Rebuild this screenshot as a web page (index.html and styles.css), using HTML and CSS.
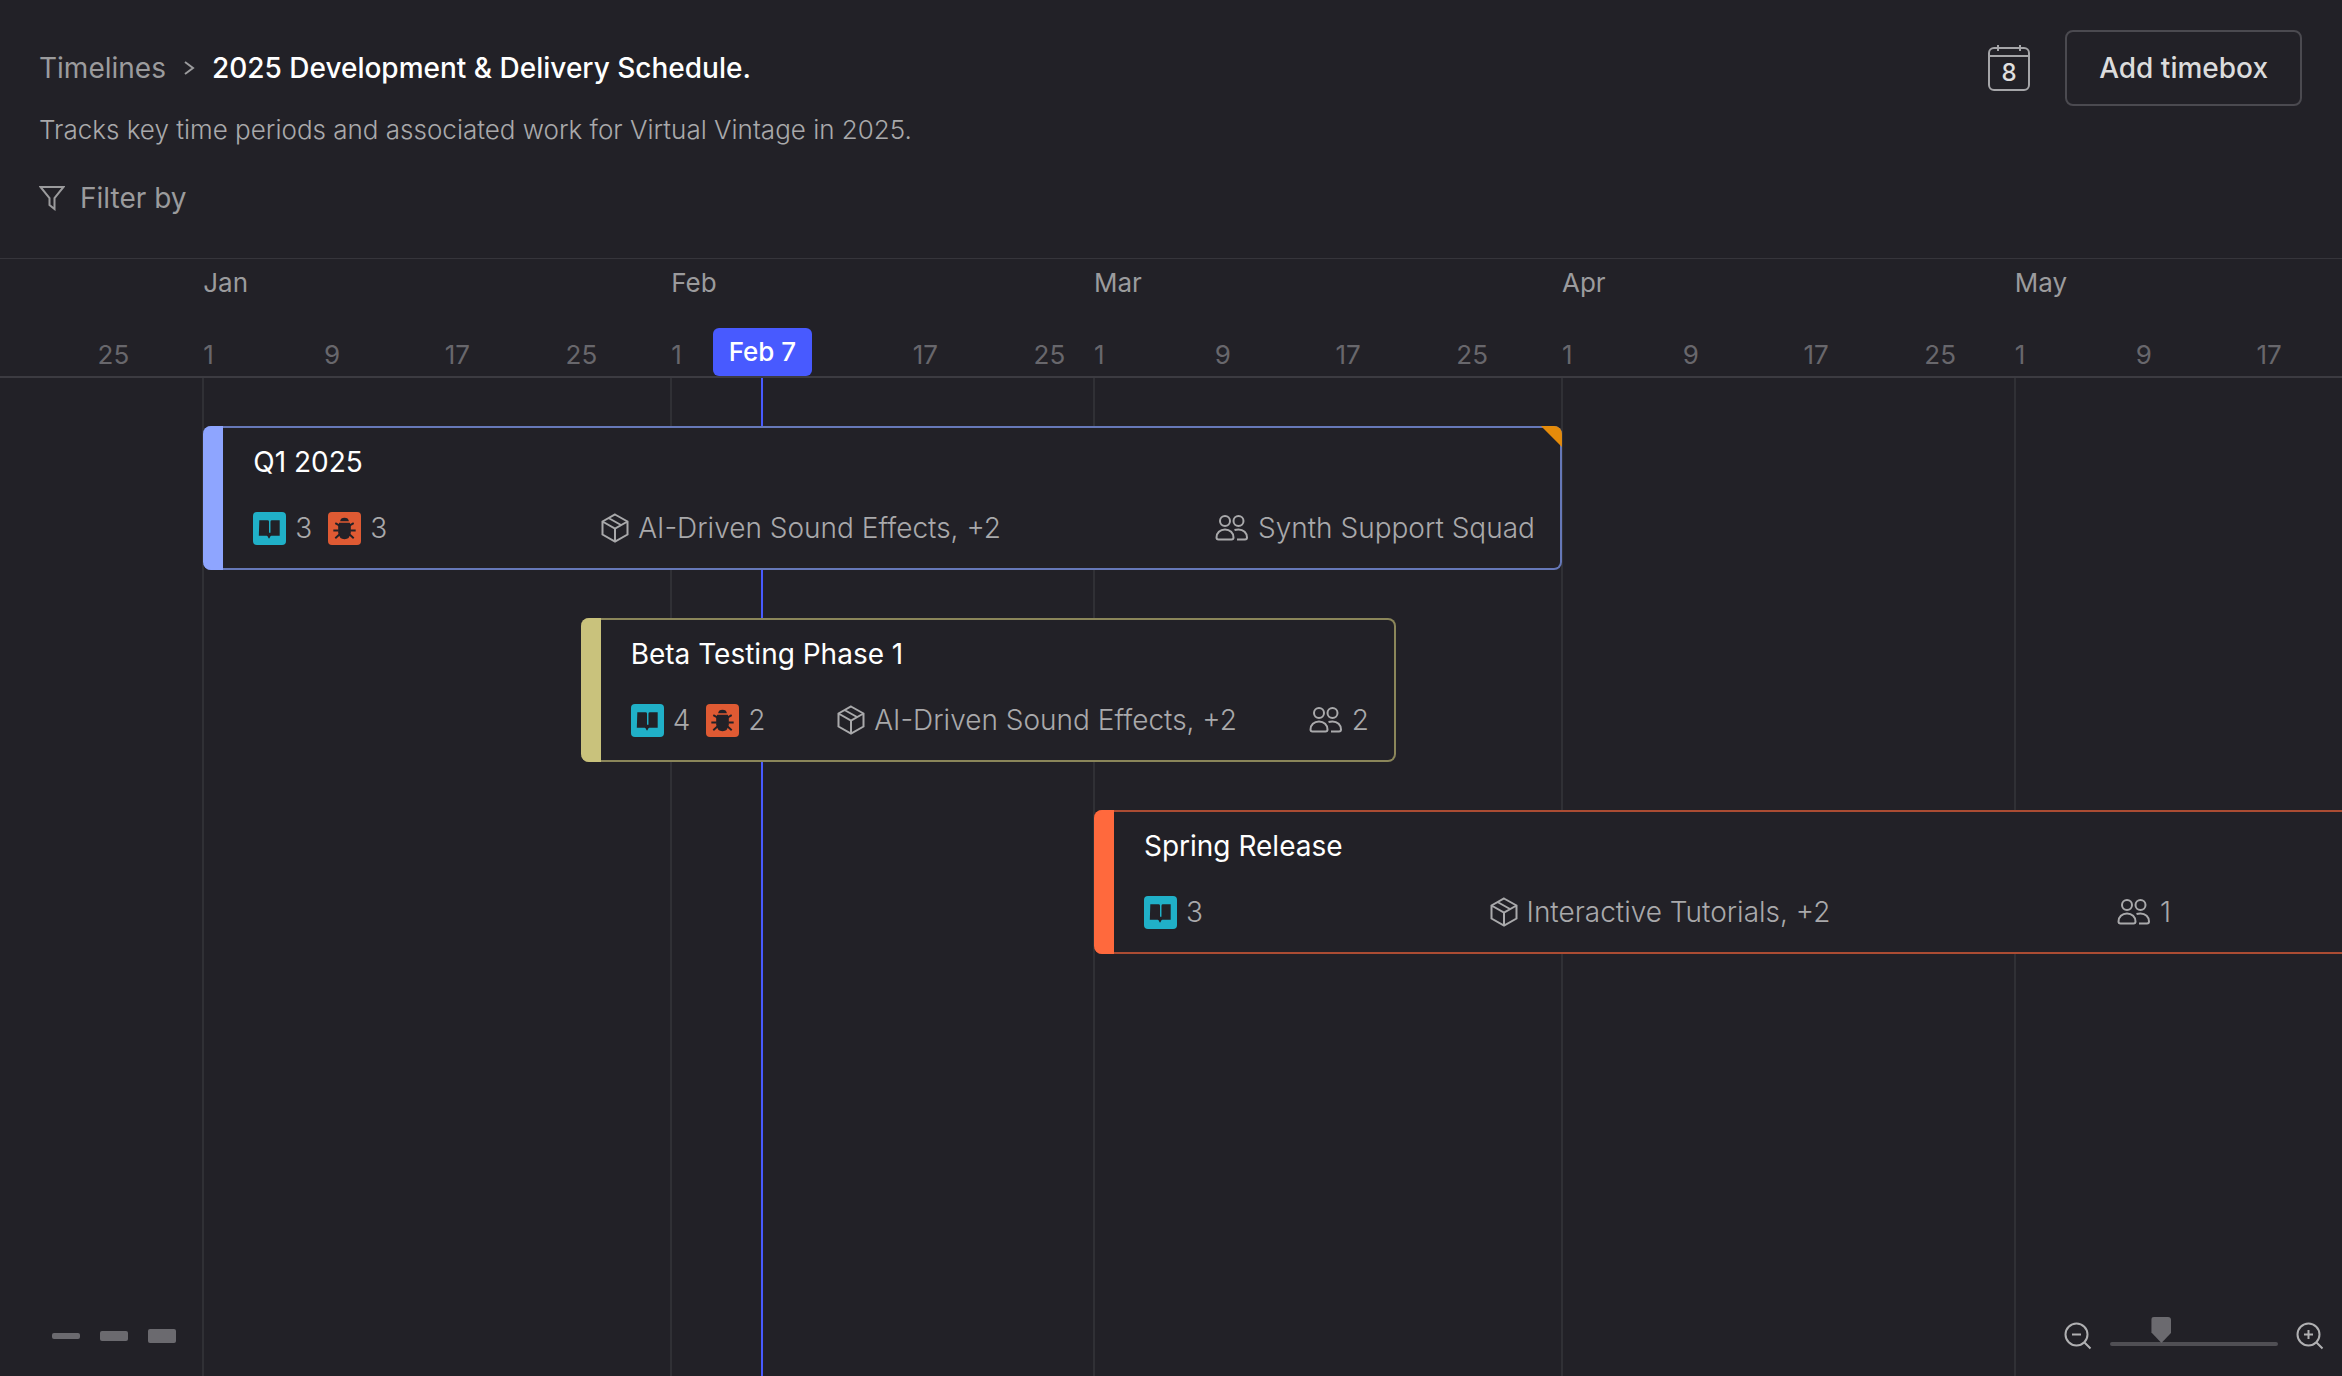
FILE: index.html
```html
<!DOCTYPE html>
<html lang="en">
<head>
    <meta charset="utf-8">
    <meta name="viewport" content="width=device-width, initial-scale=1">
    <title>2025 Development &amp; Delivery Schedule | Timelines</title>
    <link rel="stylesheet" href="styles.css">
</head>
<body>
    <svg class="sprite" aria-hidden="true">
        <symbol id="icon-story" viewBox="0 0 34 34">
            <path d="M6.500 8.500h8.500q1.500 0 1.500 1.500v11.500h1.500v-11.500q0-1.500 1.500-1.500h8v16h-8.500q-1 0-1.500 1.500l-1 1.500-1-1.500q-.5-1.500-1.500-1.500h-8z"/>
        </symbol>
        <symbol id="icon-bug" viewBox="0 0 34 34">
            <path d="M12.500 9.500q.5-3.500 4.500-3.500t4.500 3.500z"/>
            <path d="M11.500 11h11l1 4v6q-1 7-6.500 7t-6.500-7v-6z"/>
            <path class="stroke" d="M12 14l-4.500-2.500M22 14l4.500-2.500M11 19h-5.500M23 19h5.500M12 23l-4.500 4M22 23l4.500 4"/>
        </symbol>
        <symbol id="icon-cube" viewBox="0 0 28 30">
            <path d="M14 1.500l12.500 7v13l-12.500 7-12.500-7v-13zM1.500 8.500l12.500 7 12.500-7M14 15.500v13M7.500 5l12.500 7"/>
        </symbol>
        <symbol id="icon-people" viewBox="0 0 34 28">
            <circle cx="10" cy="7" r="5"/>
            <circle cx="23.500" cy="7" r="5"/>
            <path d="M10 15.500c5 0 8.500 3.500 8.500 8q0 2-2 2h-13q-2 0-2-2c0-4.500 3.500-8 8.500-8zM19.500 16q1.500-.5 4-.5c5 0 8.500 3.500 8.500 8q0 2-2 2h-8"/>
        </symbol>
    </svg>

    <header class="header">
        <div class="header-top">
            <nav class="breadcrumb" aria-label="Breadcrumb">
                <a href="#">Timelines</a>
                <svg class="chevron" viewBox="0 0 12 18" aria-hidden="true"><path d="M2 3l8 6-8 6"/></svg>
                <h1>2025 Development &amp; Delivery Schedule.</h1>
            </nav>
            <div class="actions">
                <button class="calendar" aria-label="Go to today">
                    <svg viewBox="0 0 42 46" aria-hidden="true">
                        <rect x="1" y="3" width="40" height="42" rx="5"/>
                        <path d="M1 11h40M10 0v6M32 0v6"/>
                    </svg>
                    <span>8</span>
                </button>
                <button class="add">Add timebox</button>
            </div>
        </div>
        <p class="description">Tracks key time periods and associated work for Virtual Vintage in 2025.</p>
        <button class="filter">
            <svg viewBox="0 0 26 26" aria-hidden="true"><path d="M1.500 2h23l-9 11v11l-5-4v-7z"/></svg>
            Filter by
        </button>
    </header>

    <main class="timeline">
        <div class="ruler">
            <div class="months days">
                <span class="jan">Jan</span>
                <span class="feb">Feb</span>
                <span class="mar">Mar</span>
                <span class="apr">Apr</span>
                <span class="may">May</span>
            </div>
            <!-- columns are days, the first one is Dec 19 -->
            <div class="dates days">
                <span style="grid-column: 7">25</span>
                <span style="grid-column: 14">1</span>
                <span style="grid-column: 22">9</span>
                <span style="grid-column: 30">17</span>
                <span style="grid-column: 38">25</span>
                <span style="grid-column: 45">1</span>
                <span class="today" style="grid-column: 51">Feb 7</span>
                <span style="grid-column: 61">17</span>
                <span style="grid-column: 69">25</span>
                <span style="grid-column: 73">1</span>
                <span style="grid-column: 81">9</span>
                <span style="grid-column: 89">17</span>
                <span style="grid-column: 97">25</span>
                <span style="grid-column: 104">1</span>
                <span style="grid-column: 112">9</span>
                <span style="grid-column: 120">17</span>
                <span style="grid-column: 128">25</span>
                <span style="grid-column: 134">1</span>
                <span style="grid-column: 142">9</span>
                <span style="grid-column: 150">17</span>
            </div>
        </div>

        <div class="canvas">
            <div class="lines days" aria-hidden="true">
                <i class="jan"></i>
                <i class="feb"></i>
                <i class="mar"></i>
                <i class="apr"></i>
                <i class="may"></i>
                <i class="now"></i>
            </div>

            <div class="rows days">
                <article class="timebox blue" style="grid-column: 14 / 104">
                    <h2>Q1 2025</h2>
                    <div class="meta">
                        <div class="counts">
                            <span><svg class="badge story"><use href="#icon-story"/></svg>3</span>
                            <span><svg class="badge bug"><use href="#icon-bug"/></svg>3</span>
                        </div>
                        <span class="item"><svg class="cube"><use href="#icon-cube"/></svg>AI-Driven Sound Effects, +2</span>
                        <span class="item"><svg class="people"><use href="#icon-people"/></svg>Synth Support Squad</span>
                    </div>
                    <i class="flag"></i>
                </article>

                <article class="timebox yellow" style="grid-column: 39 / 93">
                    <h2>Beta Testing Phase 1</h2>
                    <div class="meta">
                        <div class="counts">
                            <span><svg class="badge story"><use href="#icon-story"/></svg>4</span>
                            <span><svg class="badge bug"><use href="#icon-bug"/></svg>2</span>
                        </div>
                        <span class="item"><svg class="cube"><use href="#icon-cube"/></svg>AI-Driven Sound Effects, +2</span>
                        <span class="item"><svg class="people"><use href="#icon-people"/></svg>2</span>
                    </div>
                </article>

                <article class="timebox orange continues" style="grid-column: 73 / -1">
                    <h2>Spring Release</h2>
                    <div class="meta">
                        <div class="counts">
                            <span><svg class="badge story"><use href="#icon-story"/></svg>3</span>
                        </div>
                        <span class="item"><svg class="cube"><use href="#icon-cube"/></svg>Interactive Tutorials, +2</span>
                        <span class="item"><svg class="people"><use href="#icon-people"/></svg>1</span>
                    </div>
                </article>
            </div>

            <footer class="controls">
                <div class="density">
                    <button class="small" aria-label="Compact rows"></button>
                    <button class="medium" aria-label="Medium rows"></button>
                    <button class="large" aria-label="Large rows"></button>
                </div>
                <div class="zoom">
                    <button aria-label="Zoom out">
                        <svg viewBox="0 0 28 28"><circle cx="12.500" cy="12.500" r="11"/><path d="M20.500 20.500l6 6M8 12.500h9"/></svg>
                    </button>
                    <input type="range" min="0" max="100" value="28" aria-label="Zoom level">
                    <button aria-label="Zoom in">
                        <svg viewBox="0 0 28 28"><circle cx="12.500" cy="12.500" r="11"/><path d="M20.500 20.500l6 6M8 12.500h9M12.500 8v9"/></svg>
                    </button>
                </div>
            </footer>
        </div>
    </main>
</body>
</html>
```

FILE: styles.css
```css
:root {
    --bg: #222127;
    --line: #36353b;
    --muted: #9b9b9d;
    --muted-light: #a9a9ab;
    --faint: #68676c;
    --accent: #485aff;
}

* {
    box-sizing: border-box;
}

body {
    display: flex;
    flex-direction: column;
    min-height: 100vh;
    margin: 0;
    overflow-x: hidden;
    background: var(--bg);
    color: var(--muted);
    font-family: Inter, sans-serif;
    font-size: 28px;
    line-height: 36px;
}

h1, h2, p {
    margin: 0;
    font-size: inherit;
}

button {
    padding: 0;
    border: 0;
    background: none;
    color: inherit;
    font: inherit;
    cursor: pointer;
}

a {
    color: inherit;
    text-decoration: none;
}

svg {
    flex: none;
    fill: none;
    stroke: currentColor;
    stroke-width: 2;
}

.sprite {
    position: absolute;
    width: 0;
    height: 0;
}

/* --- Header --- */
.header {
    height: 258px;
    padding: 30px 40px 0 39px;
}

.header-top {
    display: flex;
    justify-content: space-between;
    align-items: center;
}

.breadcrumb {
    display: flex;
    align-items: center;
    gap: 17px;
}

.breadcrumb h1 {
    color: #fff;
    font-weight: 500;
}

.chevron {
    width: 12px;
    height: 20px;
}

.actions {
    display: flex;
    align-items: center;
    gap: 35px;
}

.calendar {
    display: grid;
    justify-items: center;
    color: #e0e0e0;
    font-size: 24px;
    font-weight: 500;
    line-height: 24px;
}

.calendar svg {
    grid-area: 1 / 1;
    width: 42px;
    height: 46px;
    stroke: #a5a5a8;
}

.calendar span {
    grid-area: 1 / 1;
    padding-top: 16px;
}

.add {
    height: 76px;
    padding: 0 32px;
    border: 2px solid #4b4a50;
    border-radius: 8px;
    color: #dcdcdc;
    font-weight: 500;
}

.description {
    margin-top: 6px;
    color: var(--muted-light);
    font-size: 26px;
    font-weight: 300;
}

.filter {
    display: flex;
    align-items: center;
    gap: 15px;
    margin-top: 32px;
}

.filter svg {
    width: 26px;
    height: 26px;
}

/* --- Timeline --- */
.timeline {
    display: flex;
    flex-direction: column;
    flex: 1;
    border-top: 1px solid var(--line);
}

.days {
    display: grid;
    grid-template-columns: repeat(155, minmax(0, 1fr));
    margin: 0 -5px 0 7px;
    white-space: nowrap;
}

.jan { grid-column: 14; }
.feb { grid-column: 45; }
.mar { grid-column: 73; }
.apr { grid-column: 104; }
.may { grid-column: 134; }
.now { grid-column: 51; }

.ruler {
    border-bottom: 2px solid #3c3b41;
    font-size: 26px;
}

.months {
    padding-top: 6px;
}

.dates {
    height: 48px;
    margin-top: 27px;
    align-items: center;
    color: var(--faint);
    line-height: 54px;
}

.today {
    align-self: start;
    justify-self: center;
    margin-right: 14px;
    padding: 0 16px;
    border-radius: 6px;
    background: var(--accent);
    color: #fff;
    font-weight: 500;
    line-height: 48px;
}

.canvas {
    position: relative;
    display: flex;
    flex-direction: column;
    flex: 1;
}

/* the lines sit just left of the labels */
.lines {
    position: absolute;
    inset: 0 1px 0 -1px;
}

.lines i {
    grid-row: 1;
    border-left: 2px solid #303035;
}

.lines .now {
    border-color: var(--accent);
}

.rows {
    position: relative;
    row-gap: 48px;
    padding: 48px 0;
}

/* --- Timebox --- */
.timebox {
    position: relative;
    height: 144px;
    padding: 16px 25px 0 50px;
    border: 2px solid var(--edge);
    border-left: 0;
    border-radius: 8px;
    background: var(--bg);
}

.timebox::before {
    position: absolute;
    content: "";
    top: -2px;
    bottom: -2px;
    left: 0;
    width: 20px;
    border-radius: 8px 0 0 8px;
    background: var(--color);
}

.timebox h2 {
    color: #fff;
    font-weight: 400;
}

.blue {
    --color: #8ea5ff;
    --edge: #6678b8;
}

.yellow {
    --color: #c9c27c;
    --edge: #8b865a;
}

.orange {
    --color: #ff693d;
    --edge: #ab4c33;
}

/* runs past the right edge of the window */
.continues {
    padding-right: 176px;
    border-right: 0;
    border-radius: 8px 0 0 8px;
}

.meta,
.counts,
.counts span,
.item {
    display: flex;
    align-items: center;
}

.meta {
    justify-content: space-between;
    margin-top: 30px;
    color: var(--muted-light);
    font-weight: 300;
}

.counts {
    gap: 16px;
}

.counts span,
.item {
    gap: 9px;
}

.badge {
    width: 33px;
    height: 33px;
    border-radius: 4px;
    fill: var(--bg);
    stroke: none;
}

.stroke {
    stroke: var(--bg);
}

.story {
    background: #20b0c8;
}

.bug {
    background: #df5a33;
}

.cube {
    width: 28px;
    height: 30px;
}

.people {
    width: 34px;
    height: 28px;
}

.flag {
    position: absolute;
    top: -2px;
    right: -2px;
    width: 21px;
    height: 21px;
    border-radius: 0 8px 0 0;
    background: #e58b0a;
    clip-path: polygon(0 0, 100% 0, 100% 100%);
}

/* --- Bottom controls --- */
.controls {
    position: relative;
    display: flex;
    justify-content: space-between;
    align-items: center;
    height: 80px;
    margin-top: auto;
    padding: 0 18px 0 52px;
}

.density,
.zoom {
    display: flex;
    align-items: center;
}

.density {
    gap: 20px;
}

.zoom {
    gap: 18px;
}

.density button {
    width: 28px;
    border-radius: 2px;
    background: #6b6a6f;
}

.density .small { height: 6px; }
.density .medium { height: 10px; }
.density .large { height: 14px; }

.zoom button {
    display: flex;
    color: #b0b0b2;
}

.zoom svg {
    width: 28px;
    height: 28px;
}

.zoom input {
    appearance: none;
    width: 168px;
    height: 20px;
    margin: 0;
    background: none;
}

.zoom input::-webkit-slider-runnable-track {
    height: 4px;
    margin-top: 16px;
    border-radius: 2px;
    background: #504f54;
}

.zoom input::-webkit-slider-thumb {
    appearance: none;
    width: 20px;
    height: 26px;
    margin-top: -25px;
    border-radius: 3px;
    background: #6b6a6f;
    clip-path: polygon(0 0, 100% 0, 100% 60%, 50% 100%, 0 60%);
}
```
